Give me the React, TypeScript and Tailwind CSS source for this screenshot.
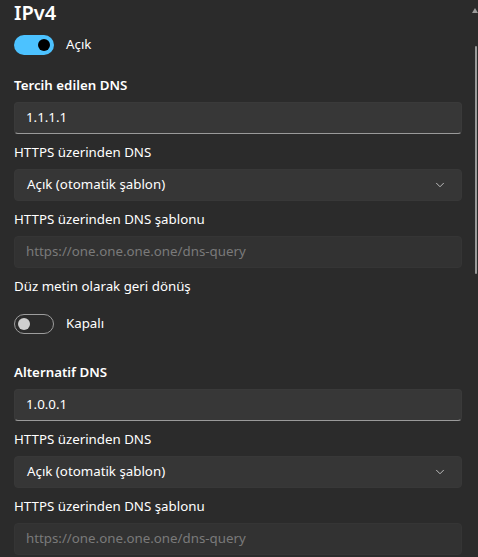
import { ChevronDown } from "lucide-react";

function Toggle({ on, label }: { on: boolean; label: string }) {
  return (
    <div className="flex items-center gap-3">
      {on ? (
        <div className="flex h-5 w-10 items-center justify-end rounded-full bg-[#4cc2ff] pr-1">
          <div className="h-3 w-3 rounded-full bg-black" />
        </div>
      ) : (
        <div className="flex h-5 w-10 items-center rounded-full border border-[#9d9d9d] pl-[3px]">
          <div className="h-3 w-3 rounded-full bg-[#cfcfcf]" />
        </div>
      )}
      <span className="text-[13.3px] text-[#ffffff]">{label}</span>
    </div>
  );
}

function TextBox({ value }: { value: string }) {
  return (
    <div className="flex h-8 items-center rounded-[4px] border border-[#3a3a3a] border-b-[#9a9a9a] bg-[#373737] px-[11px] text-[13.3px] text-white">
      {value}
    </div>
  );
}

function Select({ value }: { value: string }) {
  return (
    <div className="flex h-8 items-center justify-between rounded-[4px] border border-[#383838] bg-[#363636] pl-3 pr-[14px] text-[13.3px] text-white">
      <span>{value}</span>
      <ChevronDown className="h-3.5 w-3.5 text-[#cfcfcf]" strokeWidth={1.5} />
    </div>
  );
}

function Disabled({ placeholder }: { placeholder: string }) {
  return (
    <div className="flex h-8 items-center rounded-[4px] border border-[#353535] bg-[#323232] px-[11px] text-[13.3px] text-[#7a7a7a]">
      {placeholder}
    </div>
  );
}

function DnsBlock({ title, address, fallback }: { title: string; address: string; fallback?: boolean }) {
  return (
    <div className="flex flex-col">
      <div className="mb-[7px] text-[13.3px] leading-5 font-semibold text-white">{title}</div>
      <TextBox value={address} />
      <div className="mt-[8px] mb-[7px] text-[13.3px] leading-5 text-white">HTTPS üzerinden DNS</div>
      <Select value="Açık (otomatik şablon)" />
      <div className="mt-[8px] mb-[7px] text-[13.3px] leading-5 text-white">HTTPS üzerinden DNS şablonu</div>
      <Disabled placeholder="https://one.one.one.one/dns-query" />
      {fallback && (
        <>
          <div className="mt-[8px] text-[13.3px] leading-5 text-white">Düz metin olarak geri dönüş</div>
          <div className="mt-[18px]">
            <Toggle on={false} label="Kapalı" />
          </div>
        </>
      )}
    </div>
  );
}

export default function App() {
  return (
    <div className="relative h-[557px] w-[478px] overflow-hidden bg-[#2b2b2b] font-['Noto_Sans',sans-serif]">
      <div className="flex w-[462px] flex-col pl-[14px]">
        <h1 className="text-xl leading-[26px] font-semibold text-white">IPv4</h1>
        <div className="mt-[9px]">
          <Toggle on label="Açık" />
        </div>
        <div className="mt-[20px]">
          <DnsBlock title="Tercih edilen DNS" address="1.1.1.1" fallback />
        </div>
        <div className="mt-[28px]">
          <DnsBlock title="Alternatif DNS" address="1.0.0.1" />
        </div>
      </div>
      {/* scrollbar */}
      <div className="absolute top-[8px] right-0 h-0 w-0 border-x-[3px] border-b-[5px] border-x-transparent border-b-[#9a9a9a]" />
      <div className="absolute top-[46px] right-[1px] h-[228px] w-[2px] rounded-full bg-[#9a9a9a]" />
    </div>
  );
}
